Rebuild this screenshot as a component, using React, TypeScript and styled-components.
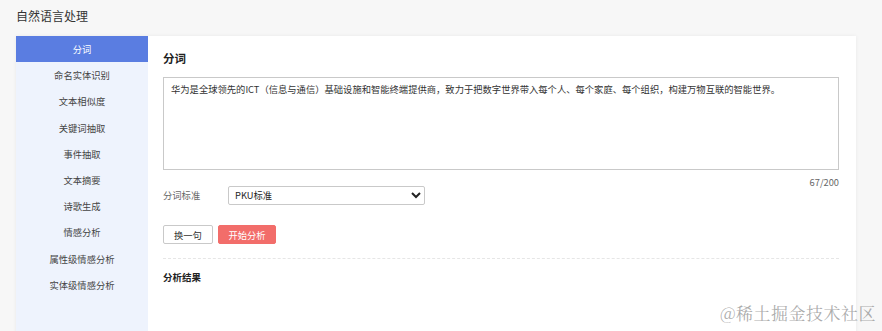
import styled, { createGlobalStyle } from "styled-components";

const GlobalStyle = createGlobalStyle`
	html, body {
		margin: 0;
		padding: 0;
		background: #f7f7f7;
		font-family: "Noto Sans CJK SC", "Noto Sans", sans-serif;
		color: #333;
		overflow: hidden;
	}
`;

const Page = styled.div`
	position: relative;
	height: 331px;
	padding: 0 26px 0 16px;
	box-sizing: border-box;
`;

const Title = styled.h1`
	margin: 0;
	height: 36px;
	line-height: 31px;
	font-size: 12px;
	font-weight: 400;
	color: #333;
`;

const Card = styled.div`
	display: flex;
	background: #fff;
	box-shadow: 0 0 4px rgba(0, 0, 0, 0.06);
	min-height: 300px;
`;

const Side = styled.ul`
	list-style: none;
	margin: 0;
	padding: 0;
	width: 132px;
	flex-shrink: 0;
	background: #eef3fd;
	font-size: 9.3px;
`;

const SideItem = styled.li<{ $active?: boolean }>`
	height: 26.2px;
	line-height: 26px;
	text-align: center;
	color: ${(p) => (p.$active ? "#fff" : "#444")};
	background: ${(p) => (p.$active ? "#5a7de1" : "transparent")};
`;

const Main = styled.div`
	flex: 1;
	padding: 12px 17px 0 15px;
	font-size: 9.3px;
`;

const Heading = styled.h2`
	margin: 0 0 9px;
	font-size: 11.5px;
	font-weight: 700;
	line-height: 20px;
	color: #222;
`;

const TextBox = styled.textarea`
	display: block;
	width: 100%;
	height: 93px;
	box-sizing: border-box;
	border: 1px solid #c9c9c9;
	padding: 3px 7px;
	font-family: inherit;
	font-size: 9.3px;
	color: #333;
	resize: none;
	line-height: 16px;
`;

const Counter = styled.div`
	text-align: right;
	color: #666;
	font-size: 9.3px;
	line-height: 12px;
	margin-top: 6px;
`;

const FieldRow = styled.div`
	display: flex;
	align-items: center;
	margin-top: -3px;
	height: 20px;
`;

const Label = styled.label`
	width: 65px;
	color: #666;
	font-size: 9.3px;
`;

const Select = styled.select`
	width: 197px;
	height: 19px;
	border: 1px solid #c9c9c9;
	border-radius: 2px;
	font-family: inherit;
	font-size: 9.3px;
	color: #222;
	background: #fff;
	padding: 0 2px;
`;

const Actions = styled.div`
	display: flex;
	gap: 5px;
	margin-top: 20px;
`;

const Button = styled.button<{ $primary?: boolean }>`
	height: 19px;
	padding: 0 ${(p) => (p.$primary ? "9.5px" : "10px")};
	font-family: inherit;
	font-size: 9.3px;
	border-radius: 2px;
	border: 1px solid ${(p) => (p.$primary ? "#f26d6a" : "#c9c9c9")};
	background: ${(p) => (p.$primary ? "#f26d6a" : "#fff")};
	color: ${(p) => (p.$primary ? "#fff" : "#333")};
`;

const Divider = styled.hr`
	margin: 14px 0 0;
	border: 0;
	border-top: 1px dashed #e6e6e6;
`;

const ResultTitle = styled.h3`
	margin: 10px 0 0;
	font-size: 9.5px;
	font-weight: 700;
	color: #222;
	line-height: 16px;
`;

const Watermark = styled.div`
	position: absolute;
	right: 6px;
	bottom: 6px;
	font-family: "Noto Serif CJK SC", "Noto Sans CJK SC", serif;
	font-size: 17px;
	color: rgba(150, 150, 150, 0.8);
	letter-spacing: 0.5px;
`;

const menu = [
	"分词",
	"命名实体识别",
	"文本相似度",
	"关键词抽取",
	"事件抽取",
	"文本摘要",
	"诗歌生成",
	"情感分析",
	"属性级情感分析",
	"实体级情感分析",
];

const text =
	"华为是全球领先的ICT（信息与通信）基础设施和智能终端提供商，致力于把数字世界带入每个人、每个家庭、每个组织，构建万物互联的智能世界。";

export default function App() {
	return (
		<>
			<GlobalStyle />
			<Page>
				<Title>自然语言处理</Title>
				<Card>
					<Side>
						{menu.map((m, i) => (
							<SideItem key={m} $active={i === 0}>
								{m}
							</SideItem>
						))}
					</Side>
					<Main>
						<Heading>分词</Heading>
						<TextBox defaultValue={text} />
						<Counter>{text.length}/200</Counter>
						<FieldRow>
							<Label>分词标准</Label>
							<Select defaultValue="pku">
								<option value="pku">PKU标准</option>
								<option value="msr">MSR标准</option>
							</Select>
						</FieldRow>
						<Actions>
							<Button>换一句</Button>
							<Button $primary>开始分析</Button>
						</Actions>
						<Divider />
						<ResultTitle>分析结果</ResultTitle>
					</Main>
				</Card>
				<Watermark>@稀土掘金技术社区</Watermark>
			</Page>
		</>
	);
}
